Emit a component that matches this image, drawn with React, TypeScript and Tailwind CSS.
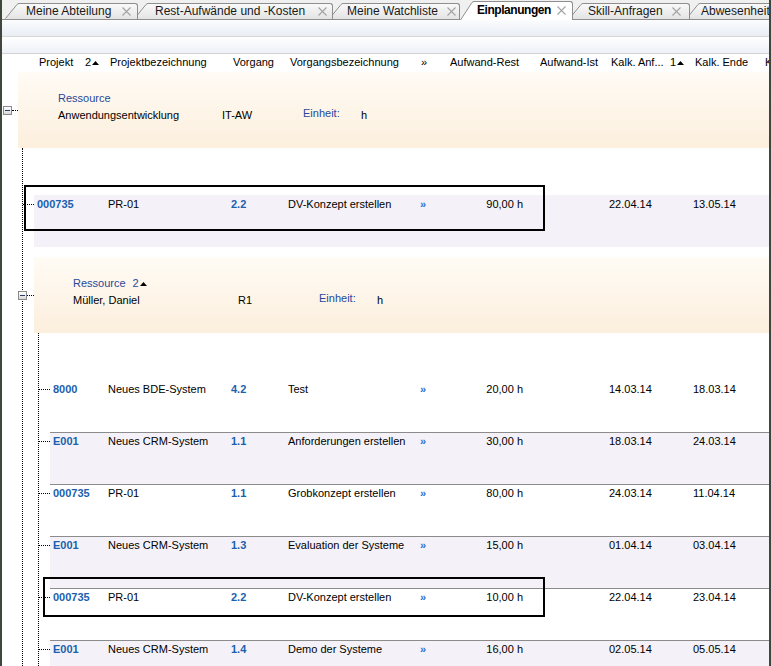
import React from 'react';

type Row = {
  proj: string;
  bez: string;
  vg: string;
  vbez: string;
  rest: string;
  anf: string;
  ende: string;
  alt: boolean;
  line: boolean;
};

const muellerRows: Row[] = [
  { proj: '8000', bez: 'Neues BDE-System', vg: '4.2', vbez: 'Test', rest: '20,00 h', anf: '14.03.14', ende: '18.03.14', alt: false, line: false },
  { proj: 'E001', bez: 'Neues CRM-System', vg: '1.1', vbez: 'Anforderungen erstellen', rest: '30,00 h', anf: '18.03.14', ende: '24.03.14', alt: true, line: true },
  { proj: '000735', bez: 'PR-01', vg: '1.1', vbez: 'Grobkonzept erstellen', rest: '80,00 h', anf: '24.03.14', ende: '11.04.14', alt: false, line: true },
  { proj: 'E001', bez: 'Neues CRM-System', vg: '1.3', vbez: 'Evaluation der Systeme', rest: '15,00 h', anf: '01.04.14', ende: '03.04.14', alt: true, line: true },
  { proj: '000735', bez: 'PR-01', vg: '2.2', vbez: 'DV-Konzept erstellen', rest: '10,00 h', anf: '22.04.14', ende: '23.04.14', alt: false, line: true },
  { proj: 'E001', bez: 'Neues CRM-System', vg: '1.4', vbez: 'Demo der Systeme', rest: '16,00 h', anf: '02.05.14', ende: '05.05.14', alt: true, line: true },
];

const awRow: Row = {
  proj: '000735', bez: 'PR-01', vg: '2.2', vbez: 'DV-Konzept erstellen', rest: '90,00 h', anf: '22.04.14', ende: '13.05.14', alt: true, line: false,
};

const SortUp = () => (
  <svg width="7" height="4" viewBox="0 0 7 4" className="ml-[1px] inline-block">
    <polygon points="0,4 3.5,0 7,4" fill="#000" />
  </svg>
);

const CloseX = () => (
  <svg width="9" height="9" viewBox="0 0 9 9" className="shrink-0">
    <path d="M0.5 0.5 L8.5 8.5 M8.5 0.5 L0.5 8.5" stroke="#a3a3a3" strokeWidth="1.1" />
  </svg>
);

interface TabProps {
  label: string;
  id: string;
  active?: boolean;
  className?: string;
  bodyClass: string;
}

const Tab: React.FC<TabProps> = ({ label, id, active, className, bodyClass }) => {
  const h = active ? 19 : 16;
  const top = active ? '#ffffff' : '#f9f9f9';
  const bottom = active ? '#ffffff' : '#e4e4e4';
  return (
    <div className={`relative flex shrink-0 ${active ? 'mb-[-1px] h-[19px]' : 'h-[16px]'} ${className ?? ''}`}>
      <svg width="14" height={h} className="block shrink-0">
        <defs>
          <linearGradient id={id} x1="0" y1="0" x2="0" y2="1">
            <stop offset="0" stopColor={top} />
            <stop offset="1" stopColor={bottom} />
          </linearGradient>
        </defs>
        <path d={`M0 ${h} L12 1.5 Q13 0.5 14 0.5 L14 ${h} Z`} fill={`url(#${id})`} />
        <path d={`M0.5 ${active ? h : h - 0.5} L12 1.5 Q13 0.5 14 0.5`} fill="none" stroke="#8e8e8e" />
      </svg>
      <div
        className={`flex items-center justify-between overflow-hidden rounded-tr-[3px] border-t border-r border-[#8e8e8e] text-[12px] ${
          active
            ? 'bg-white pb-[2px] font-bold tracking-[-0.45px] text-black'
            : 'bg-gradient-to-b from-[#f9f9f9] to-[#e4e4e4] text-[#1a1a1a]'
        } ${bodyClass}`}
      >
        <span className="whitespace-nowrap">{label}</span>
        <CloseX />
      </div>
    </div>
  );
};

const TabBar = () => (
  <div className="flex h-[20px] items-end border-b border-[#8e8e8e] bg-[#f0f0f0] pl-[3px]">
    <Tab id="t1" label="Meine Abteilung" className="z-[6]" bodyClass="w-[119px] pl-[7px] pr-[6px]" />
    <Tab id="t2" label="Rest-Aufwände und -Kosten" className="z-[5] ml-[-4px]" bodyClass="w-[185px] pl-[7px] pr-[5px]" />
    <Tab id="t3" label="Meine Watchliste" className="z-[4] ml-[-4px]" bodyClass="w-[117px] pl-[4px] pr-[3px]" />
    <Tab id="t4" label="Einplanungen" active className="z-[10]" bodyClass="w-[99px] pl-[3px] pr-[6px]" />
    <Tab id="t5" label="Skill-Anfragen" className="z-[3] ml-[-4px]" bodyClass="w-[107px] pl-[5px] pr-[8px]" />
    <Tab id="t6" label="Abwesenheit" className="z-[2] ml-[-4px]" bodyClass="w-[100px] pl-[1px] pr-[6px]" />
  </div>
);

const ColumnHeader = () => (
  <div className="flex h-[17px] items-center whitespace-nowrap pl-[37px]">
    <span className="w-[46px] shrink-0">Projekt</span>
    <span className="flex w-[25px] shrink-0 items-center">2<SortUp /></span>
    <span className="w-[123px] shrink-0">Projektbezeichnung</span>
    <span className="w-[57px] shrink-0">Vorgang</span>
    <span className="w-[131px] shrink-0">Vorgangsbezeichnung</span>
    <span className="w-[29px] shrink-0">»</span>
    <span className="w-[90px] shrink-0">Aufwand-Rest</span>
    <span className="w-[71px] shrink-0">Aufwand-Ist</span>
    <span className="w-[59px] shrink-0">Kalk. Anf...</span>
    <span className="flex w-[25px] shrink-0 items-center">1<SortUp /></span>
    <span className="w-[70px] shrink-0">Kalk. Ende</span>
    <span className="shrink-0">K</span>
  </div>
);

const Expander = ({ className }: { className?: string }) => (
  <div
    className={`relative flex h-[9px] w-[9px] shrink-0 items-center justify-center border border-[#8a8a8a] bg-gradient-to-b from-white to-[#d9d9d9] ${className ?? ''}`}
  >
    <div className="h-px w-[5px] bg-[#2b3a66]" />
  </div>
);

interface GroupHeaderProps {
  name: string;
  code: string;
  sorted?: boolean;
  padClass: string;
  nameClass: string;
}

const GroupHeader: React.FC<GroupHeaderProps> = ({ name, code, sorted, padClass, nameClass }) => (
  <div className={`flex-1 self-stretch bg-gradient-to-b from-[#fffbf5] to-[#fcefdd] pt-[20px] ${padClass}`}>
    <div className="flex items-center text-[#27489a]">
      Ressource
      {sorted && (
        <span className="ml-[7px] flex items-center">
          2<SortUp />
        </span>
      )}
    </div>
    <div className="mt-[4px] flex whitespace-nowrap">
      <span className={`shrink-0 ${nameClass}`}>{name}</span>
      <span className="w-[81px] shrink-0">{code}</span>
      <span className="w-[58px] shrink-0 -translate-y-[2px] text-[#27489a]">Einheit:</span>
      <span>h</span>
    </div>
  </div>
);

const DataRow = ({ row, projClass }: { row: Row; projClass: string }) => (
  <div className="flex h-[52px]">
    <div className="w-[11px] shrink-0 pt-[9px]">
      <div className="border-t border-dotted border-black" />
    </div>
    <div
      className={`flex flex-1 whitespace-nowrap ${row.alt ? 'bg-[#f4f2f8]' : 'bg-white'} ${
        row.line ? 'border-t border-[#8c8c8c] pt-[2px]' : 'pt-[3px]'
      }`}
    >
      <span className={`shrink-0 pl-[3px] font-bold text-[#1b5fae] ${projClass}`}>{row.proj}</span>
      <span className="w-[123px] shrink-0">{row.bez}</span>
      <span className="w-[57px] shrink-0 font-bold text-[#1b5fae]">{row.vg}</span>
      <span className="w-[132px] shrink-0">{row.vbez}</span>
      <span className="w-[30px] shrink-0 font-bold text-[#2e6fd1]">»</span>
      <span className="w-[73px] shrink-0 text-right">{row.rest}</span>
      <span className="w-[86px] shrink-0" />
      <span className="w-[84px] shrink-0">{row.anf}</span>
      <span>{row.ende}</span>
    </div>
  </div>
);

export default function App() {
  return (
    <div className="relative h-[666px] w-[771px] overflow-hidden border-x-2 border-[#3f463d] bg-white font-['Liberation_Sans',Arial,sans-serif] text-[11px] leading-[13px] text-black">
      <TabBar />
      <div className="h-[17px] border-b border-[#d6d6d6] bg-gradient-to-b from-[#fbfcfe] to-[#e9edf5]" />
      <div className="h-[17px] border-b border-[#d2d2d2] bg-gradient-to-b from-white to-[#eef1f7]" />
      <ColumnHeader />

      <div className="mt-[1px]">
        {/* Ressource: Anwendungsentwicklung */}
        <div className="flex h-[76px] items-center">
          <div className="flex w-[16px] shrink-0 items-center">
            <Expander className="ml-[1px]" />
            <div className="flex-1 border-t border-dotted border-black" />
          </div>
          <GroupHeader name="Anwendungsentwicklung" code="IT-AW" padClass="pl-[40px]" nameClass="w-[164px]" />
        </div>

        <div className="ml-[20px] border-l border-dotted border-black">
          <div className="h-[47px]" />
          <DataRow row={awRow} projClass="w-[74px]" />
          <div className="h-[10px]" />

          {/* Ressource: Müller, Daniel */}
          <div className="flex h-[76px] items-center">
            <div className="flex w-[11px] shrink-0 items-center">
              <Expander className="ml-[-5px]" />
              <div className="flex-1 border-t border-dotted border-black" />
            </div>
            <GroupHeader name="Müller, Daniel" code="R1" sorted padClass="pl-[39px]" nameClass="w-[165px]" />
          </div>

          <div className="ml-[15px] border-l border-dotted border-black">
            <div className="h-[47px]" />
            {muellerRows.map((r, i) => (
              <DataRow key={i} row={r} projClass="w-[58px]" />
            ))}
          </div>
        </div>
      </div>

      {/* highlight frames */}
      <div className="absolute left-[22px] top-[185px] h-[46px] w-[521px] border-2 border-black" />
      <div className="absolute left-[41px] top-[577px] h-[40px] w-[502px] border-2 border-black" />
    </div>
  );
}
